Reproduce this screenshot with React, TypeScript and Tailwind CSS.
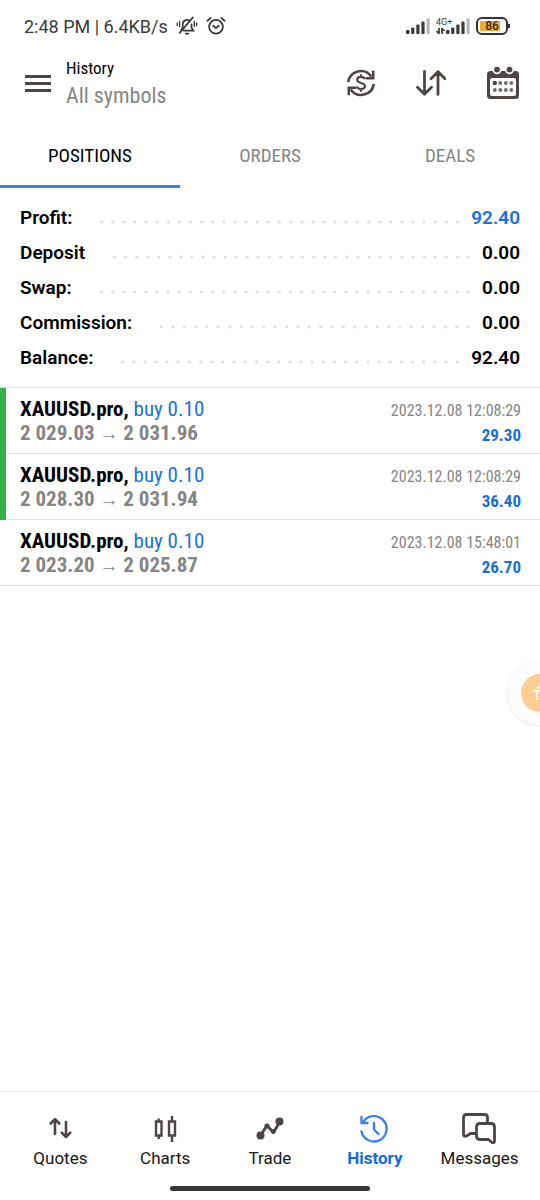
import React from "react";
import clsx from "clsx";

const CONDENSED = "font-['Roboto_Condensed','Liberation_Sans_Narrow',Roboto,sans-serif]";

interface SummaryItem {
  label: string;
  value: string;
  highlight?: boolean;
}

interface Position {
  symbol: string;
  side: string;
  open: string;
  close: string;
  time: string;
  profit: string;
  takeProfit: boolean;
}

const summary: SummaryItem[] = [
  { label: "Profit:", value: "92.40", highlight: true },
  { label: "Deposit", value: "0.00" },
  { label: "Swap:", value: "0.00" },
  { label: "Commission:", value: "0.00" },
  { label: "Balance:", value: "92.40" },
];

const positions: Position[] = [
  { symbol: "XAUUSD.pro,", side: "buy 0.10", open: "2 029.03", close: "2 031.96", time: "2023.12.08 12:08:29", profit: "29.30", takeProfit: true },
  { symbol: "XAUUSD.pro,", side: "buy 0.10", open: "2 028.30", close: "2 031.94", time: "2023.12.08 12:08:29", profit: "36.40", takeProfit: true },
  { symbol: "XAUUSD.pro,", side: "buy 0.10", open: "2 023.20", close: "2 025.87", time: "2023.12.08 15:48:01", profit: "26.70", takeProfit: false },
];

const MutedBellIcon = () => (
  <svg width="22" height="20" viewBox="0 0 24 22" fill="none" stroke="currentColor" strokeWidth="1.9" strokeLinecap="round" aria-hidden="true">
    <path d="M8.500 16h10.500l-2-3V9.200M15 5.400a4.700 4.700 0 0 0-7.700 3.800v3.600L5.500 15.500" />
    <path d="M18.500 1.500 4 18.500M10.500 19.300h3" />
    <path d="M1.300 7.500v3M3.900 6v5.500M20 6v5.500M22.600 7.500v3" strokeWidth="1.500" />
  </svg>
);

const AlarmIcon = () => (
  <svg width="20" height="20" viewBox="0 0 21 20" fill="none" stroke="currentColor" strokeWidth="1.900" strokeLinecap="round" aria-hidden="true">
    <circle cx="10.500" cy="10.800" r="7.200" />
    <path d="M1.500 4.500 5 1.500M19.500 4.500 16 1.500M7.500 9.800l3 2.500 3-2.500" />
  </svg>
);

const SignalIcon = () => (
  <svg width="24" height="16" viewBox="0 0 24 16" fill="currentColor" aria-hidden="true">
    <rect x="0" y="12" width="3.500" height="4" rx="1" />
    <rect x="5.200" y="9.500" width="3.200" height="6.500" rx="1" />
    <rect x="10.300" y="6.500" width="3.200" height="9.500" rx="1" />
    <rect x="15.400" y="3.500" width="3.200" height="12.500" rx="1" />
    <rect x="20.500" y="0.500" width="3.200" height="15.500" rx="1" className="text-[#b5b5b5]" />
  </svg>
);

const DataArrowsIcon = () => (
  <svg width="9" height="6" viewBox="0 0 9 6" fill="none" stroke="currentColor" strokeWidth="1.700" aria-hidden="true">
    <path d="M3 0v5.500L0.500 3M6 6V.5L8.500 3" />
  </svg>
);

const BatteryIcon = () => (
  <div className="flex items-center">
    <div className="rounded-md border-2 border-[#35313c] p-0.5">
      <div className="w-6 bg-linear-to-r from-[#f5ad2e] from-85% to-white to-85% text-center text-[12px] leading-[10px] font-medium text-[#33280f]">
        86
      </div>
    </div>
    <div className="h-1 w-[2px] bg-[#35313c]" />
  </div>
);

const CurrencyIcon = () => (
  <svg width="30" height="30" viewBox="0 0 30 30" fill="none" stroke="currentColor" strokeWidth="2.600" aria-hidden="true">
    <path d="M2.200 14A12.800 12.800 0 0 1 25.300 8.500M27.800 16A12.800 12.800 0 0 1 4.700 21.500" />
    <path d="M27.200 2.800v7.500h-7.500M2.800 27.200v-7.500h7.500" />
    <path d="M18.800 11.200c-.5-1.500-2-2.300-3.800-2.300-2.200 0-3.800 1.100-3.800 2.900 0 4.300 7.800 2 7.800 6.300 0 1.900-1.700 3-4 3-2.100 0-3.600-.9-4.100-2.600M15 6.200v2.800M15 21v2.800" strokeWidth="2.200" />
  </svg>
);

const SortIcon = () => (
  <svg width="30" height="26" viewBox="0 0 30 26" fill="none" stroke="currentColor" strokeWidth="2.800" strokeLinecap="round" strokeLinejoin="round" aria-hidden="true">
    <path d="M8.500 1.500v22.800M1.500 17.300l7 7 7-7M22 24.500V1.700M15 8.700l7-7 7 7" />
  </svg>
);

const CalendarIcon = () => (
  <svg width="34" height="34" viewBox="0 0 34 34" aria-hidden="true">
    <rect x="1" y="5" width="32" height="28" rx="3.500" fill="currentColor" />
    <rect x="4" y="12" width="26" height="18" rx="2" fill="white" />
    <circle cx="11" cy="4" r="4.300" fill="white" />
    <circle cx="23.500" cy="4" r="4.300" fill="white" />
    <circle cx="11" cy="3.600" r="2.900" fill="currentColor" />
    <circle cx="23.500" cy="3.600" r="2.900" fill="currentColor" />
    <g fill="#77706e">
      <circle cx="8.800" cy="17" r="2.200" fill="currentColor" />
      <circle cx="14.300" cy="17" r="2" />
      <circle cx="19.800" cy="17" r="2" />
      <circle cx="25.300" cy="17" r="2" />
      <circle cx="8.800" cy="24" r="2" />
      <circle cx="14.300" cy="24" r="2" />
      <circle cx="19.800" cy="24" r="2" />
      <circle cx="25.300" cy="24" r="2" />
    </g>
  </svg>
);

const QuotesIcon = () => (
  <svg width="36" height="32" viewBox="0 0 36 32" fill="none" stroke="currentColor" strokeWidth="2.600" strokeLinecap="round" strokeLinejoin="round" aria-hidden="true">
    <path d="M13 22V7.500M8.700 11.500l4.300-4.300 4.300 4.300M24 10v14.500M19.700 20.700l4.300 4.300 4.300-4.300" />
  </svg>
);

const ChartsIcon = () => (
  <svg width="36" height="32" viewBox="0 0 36 32" fill="none" stroke="currentColor" strokeWidth="2.400" aria-hidden="true">
    <path d="M9 9.500h5.500v14H9zM22 9.500h6v14h-6zM11.700 6.500v3M11.700 23.500V27M25 4v5.500M25 23.500V30" />
  </svg>
);

const TradeIcon = () => (
  <svg width="36" height="32" viewBox="0 0 36 32" fill="none" stroke="currentColor" strokeWidth="2.800" strokeLinejoin="round" aria-hidden="true">
    <path d="M8.500 23.500l6.500-10 6.500 7L28 9.500" />
    <circle cx="8.500" cy="23.500" r="4" fill="currentColor" stroke="none" />
    <circle cx="27.500" cy="9.500" r="4" fill="currentColor" stroke="none" />
    <circle cx="15" cy="14" r="2.600" fill="currentColor" stroke="none" />
    <circle cx="21.300" cy="19.500" r="2.400" fill="currentColor" stroke="none" />
  </svg>
);

const HistoryIcon = () => (
  <svg width="36" height="32" viewBox="0 0 36 32" fill="none" stroke="currentColor" strokeWidth="2.400" strokeLinecap="round" strokeLinejoin="round" aria-hidden="true">
    <path d="M4.500 19.500A12.700 12.700 0 1 0 6.300 9.800M4.500 5v6h6M17 11v6.500l4.500 4.500" />
  </svg>
);

const MessagesIcon = () => (
  <svg width="36" height="32" viewBox="0 0 36 32" fill="none" stroke="currentColor" strokeWidth="2.800" strokeLinejoin="round" aria-hidden="true">
    <path d="M14.500 21.500H8.500L4.500 24q-3 1-3-2V5.500q0-3 3-3h18q3 0 3 3V10" />
    <path d="M18 11.500h11q3.500 0 3.500 3.500v14q0 2.500-2.500 1.500l-3.500-3H18q-3.500 0-3.500-3.500V15q0-3.500 3.500-3.500z" />
  </svg>
);

const navItems = [
  { label: "Quotes", icon: QuotesIcon },
  { label: "Charts", icon: ChartsIcon },
  { label: "Trade", icon: TradeIcon },
  { label: "History", icon: HistoryIcon },
  { label: "Messages", icon: MessagesIcon },
];

const StatusBar = () => (
  <div className="flex h-13 items-center justify-between pr-[30px] pl-6 text-[#3a3a3a]">
    <div className="flex items-center gap-2">
      <span className="pt-0.5 text-[18px] leading-6">2:48 PM | 6.4KB/s</span>
      <MutedBellIcon />
      <AlarmIcon />
    </div>
    <div className="flex items-center gap-1.5">
      <SignalIcon />
      <div className="flex items-end gap-px">
        <div className="flex h-4 w-[9px] flex-col justify-between">
          <span className="text-[9px] leading-[8px]">4G+</span>
          <DataArrowsIcon />
        </div>
        <SignalIcon />
      </div>
      <BatteryIcon />
    </div>
  </div>
);

const AppBar = () => (
  <header className="flex h-16 items-center justify-between pr-5 pl-6">
    <div className="flex items-center gap-3">
      <button type="button" aria-label="Menu" className="mb-0.5 flex w-7 flex-col gap-1 px-px text-[#4d4644]">
        <span className="h-[3px] bg-current" />
        <span className="h-[3px] bg-current" />
        <span className="h-[3px] bg-current" />
      </button>
      <div className={clsx("pl-0.5", CONDENSED)}>
        <h1 className="text-[17px] leading-6 text-black">History</h1>
        <p className="text-[22px] leading-8 text-[#858585]">All symbols</p>
      </div>
    </div>
    <div className="mb-0.5 flex items-center gap-10 text-[#4d4644]">
      <button type="button" aria-label="Currency"><CurrencyIcon /></button>
      <button type="button" aria-label="Sort"><SortIcon /></button>
      <button type="button" aria-label="Period"><CalendarIcon /></button>
    </div>
  </header>
);

const Tabs = () => (
  <div role="tablist" className={clsx("mt-2 grid grid-cols-3 text-[19px] leading-6", CONDENSED)}>
    {["POSITIONS", "ORDERS", "DEALS"].map((tab, i) => (
      <button
        key={tab}
        type="button"
        role="tab"
        aria-selected={i === 0}
        className={clsx(
          "border-b-3 pt-5 pb-[17px]",
          i === 0 ? "border-[#3d7be8] text-black" : "border-transparent text-[#858585]"
        )}
      >
        {tab}
      </button>
    ))}
  </div>
);

const SummaryRow: React.FC<SummaryItem> = ({ label, value, highlight }) => (
  <div className="flex h-[35px] items-center text-[19px] font-semibold text-black">
    <dt>{label}</dt>
    <div
      aria-hidden="true"
      className="mt-1.5 mr-2 ml-6 h-1 flex-1 bg-[radial-gradient(circle,#dedede_1px,transparent_2px)] bg-[length:11px_4px] bg-repeat-space"
    />
    <dd className={clsx(highlight && "text-[#1a6fdc]")}>{value}</dd>
  </div>
);

const PositionRow: React.FC<Position> = ({ symbol, side, open, close, time, profit, takeProfit }) => (
  <li className="flex h-[66px] items-center border-b border-[#e2e2e2]">
    <span className={clsx("-mb-px w-1.5 self-stretch", takeProfit && "bg-[#35b34a]")} />
    <div className="flex flex-1 items-center justify-between pt-0.5 pr-[19px] pl-3.5">
      <div>
        <p className="text-[21px] leading-6 text-[#1a73dd]">
          <strong className="font-bold text-black">{symbol}</strong> {side}
        </p>
        <p className="text-[21px] leading-6 font-bold text-[#858585]">
          {open} <span className="text-[19px] font-normal">→</span> {close}
        </p>
      </div>
      <div className="pt-0.5 text-right">
        <p className="text-[16px] leading-6 text-[#858585]">{time}</p>
        <p className="text-[17px] leading-6 font-bold text-[#1a6fdc]">{profit}</p>
      </div>
    </div>
  </li>
);

const BottomNav = () => (
  <footer className="mt-auto border-t border-[#f2f2f2] pt-5">
    <nav className="grid grid-cols-5 px-2">
      {navItems.map(({ label, icon: Icon }) => {
        const active = label === "History";
        return (
          <a
            key={label}
            href={`#${label.toLowerCase()}`}
            aria-current={active ? "page" : undefined}
            className={clsx(
              "flex flex-col items-center gap-0.5 text-[17px] leading-6",
              active ? "font-bold text-[#0d6fe0]" : "text-[#161616]"
            )}
          >
            <span className={active ? "text-[#3d80f0]" : "text-[#4d4644]"}>
              <Icon />
            </span>
            {label}
          </a>
        );
      })}
    </nav>
    <div className="mx-auto mt-4 mb-[9px] h-[5px] w-50 rounded-full bg-[#363636]" />
  </footer>
);

const FloatingButton = () => (
  <button
    type="button"
    aria-label="Assistant"
    className="fixed top-[661px] -right-8 flex size-16 items-center justify-center rounded-full bg-[#fcfcfc] shadow-[0_1px_4px_rgba(0,0,0,0.1)]"
  >
    <span className="flex size-[38px] items-center justify-center rounded-full bg-[#fdcd94] text-white">
      <svg width="14" height="18" viewBox="0 0 14 18" fill="none" stroke="currentColor" strokeWidth="1.600" aria-hidden="true">
        <path d="M0.500 6.800h13M4 6.800V16M10 6.800V16M4.500 4.500 7 1.500l2.500 3" />
      </svg>
    </span>
  </button>
);

export default function App() {
  return (
    <div className="flex min-h-screen flex-col overflow-x-hidden bg-white font-[Roboto,sans-serif]">
      <StatusBar />
      <AppBar />
      <Tabs />
      <main>
        <dl className="pt-[13px] pr-5 pb-[11px] pl-5">
          {summary.map((item) => (
            <SummaryRow key={item.label} {...item} />
          ))}
        </dl>
        <ul className={clsx("border-t border-[#e2e2e2]", CONDENSED)}>
          {positions.map((position) => (
            <PositionRow key={position.open} {...position} />
          ))}
        </ul>
      </main>
      <BottomNav />
      <FloatingButton />
    </div>
  );
}
